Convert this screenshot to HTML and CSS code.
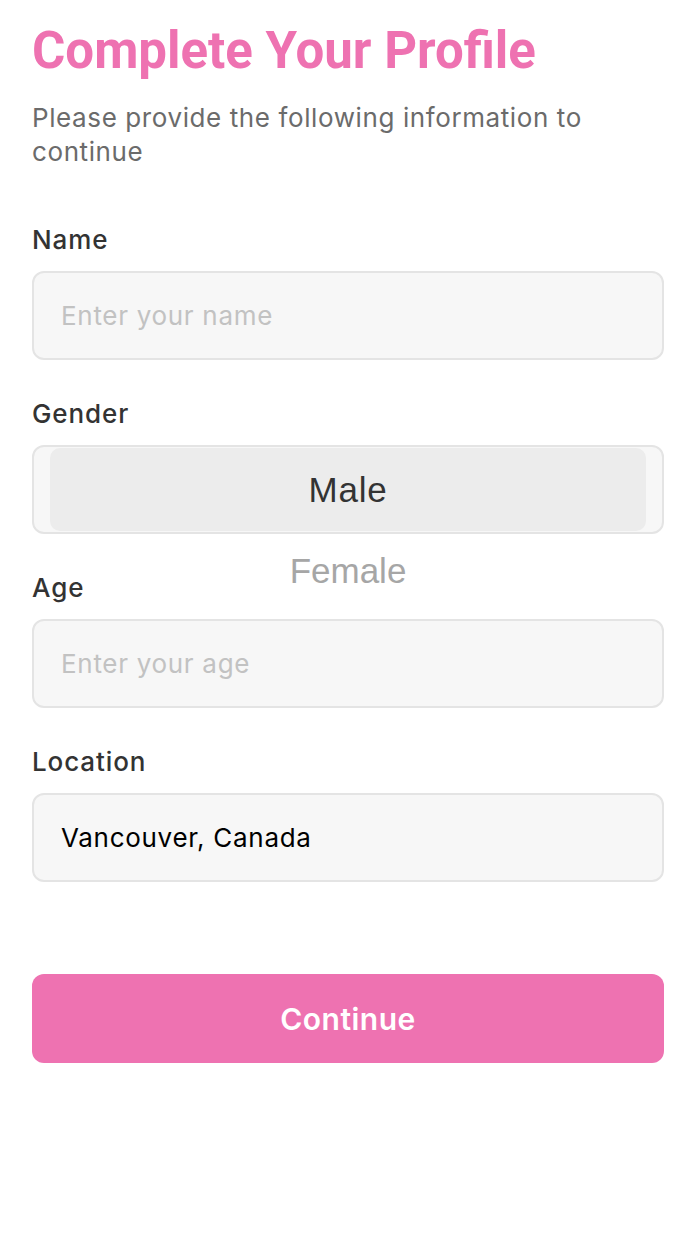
FILE: index.html
```html
<!DOCTYPE html>
<html lang="en">
<head>
<meta charset="utf-8">
<title>Complete Your Profile</title>
<link rel="stylesheet" href="styles.css">
</head>
<body>
<main class="page">
  <h1 class="title">Complete Your Profile</h1>
  <p class="subtitle">Please provide the following information to continue</p>

  <div class="form">
    <div class="field">
      <div class="label">Name</div>
      <div class="input is-placeholder">Enter your name</div>
    </div>

    <div class="field">
      <div class="label">Gender</div>
      <div class="picker">
        <div class="option is-selected">Male</div>
        <div class="option">Female</div>
      </div>
    </div>

    <div class="field">
      <div class="label">Age</div>
      <div class="input is-placeholder">Enter your age</div>
    </div>

    <div class="field">
      <div class="label">Location</div>
      <div class="input">Vancouver, Canada</div>
    </div>
  </div>

  <button class="btn" type="button">Continue</button>
</main>
</body>
</html>
```

FILE: styles.css
```css
* { box-sizing: border-box; }

html, body {
  margin: 0;
  padding: 0;
  background: #ffffff;
}

body {
  font-family: Inter, Roboto, "Liberation Sans", Arial, sans-serif;
  color: #333333;
}

.page {
  width: 696px;
  padding: 19px 32px 0;
  display: flex;
  flex-direction: column;
}

.title {
  margin: 0;
  font-family: Roboto, "Liberation Sans", Arial, sans-serif;
  font-size: 51px;
  line-height: 64px;
  font-weight: 700;
  color: #ee72b1;
}

.subtitle {
  margin: 18px 0 0;
  font-size: 26px;
  line-height: 34px;
  letter-spacing: 0.6px;
  color: #6b6b6b;
  font-weight: 400;
}

.form {
  margin-top: 55px;
  display: flex;
  flex-direction: column;
  gap: 38px;
}

.field {
  display: flex;
  flex-direction: column;
  gap: 15px;
}

.label {
  font-size: 26px;
  line-height: 32px;
  letter-spacing: 0.9px;
  font-weight: 500;
  color: #333333;
}

.input {
  height: 89px;
  border: 2px solid #e4e4e4;
  border-radius: 12px;
  background: #f7f7f7;
  padding: 0 27px;
  display: flex;
  align-items: center;
  font-size: 26px;
  letter-spacing: 0.7px;
  color: #000000;
}

.input.is-placeholder {
  color: #c2c2c2;
}

.picker {
  height: 89px;
  border: 2px solid #e4e4e4;
  border-radius: 12px;
  background: #f7f7f7;
  padding: 1px 16px;
  display: flex;
  flex-direction: column;
  overflow: visible;
}

.option {
  flex: 0 0 80px;
  display: flex;
  align-items: center;
  justify-content: center;
  font-family: "Liberation Sans", Arial, sans-serif;
  font-size: 35px;
  color: #a6a6a6;
}

.option.is-selected {
  flex-basis: 83px;
  background: #ececec;
  border-radius: 10px;
  color: #333333;
  letter-spacing: 0.8px;
}

.btn {
  margin-top: 92px;
  height: 89px;
  border: 0;
  border-radius: 12px;
  background: #ee72b1;
  color: #ffffff;
  font-family: inherit;
  font-size: 30px;
  font-weight: 600;
  letter-spacing: 0.5px;
  cursor: pointer;
}
```
